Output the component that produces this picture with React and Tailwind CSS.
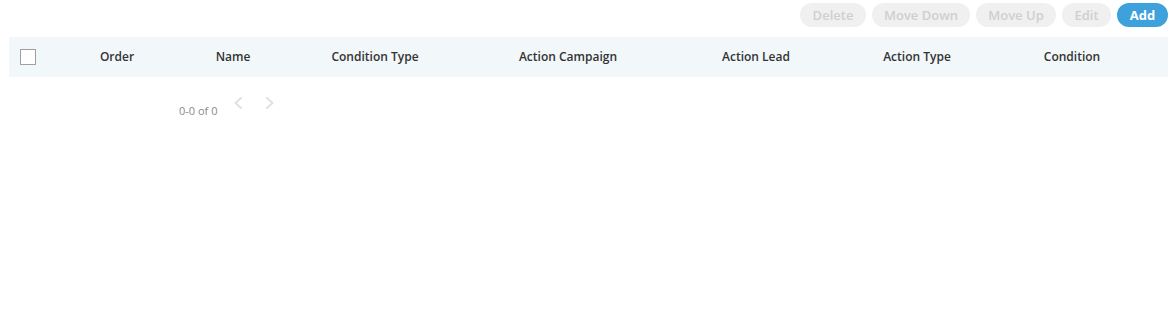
const cols = [
  { label: "Order", w: "w-[116px]" },
  { label: "Name", w: "w-[116px]" },
  { label: "Condition Type", w: "w-[168px]" },
  { label: "Action Campaign", w: "w-[218px]" },
  { label: "Action Lead", w: "w-[158px]" },
  { label: "Action Type", w: "w-[164px]" },
  { label: "Condition", w: "w-[146px]" },
]

const buttons = [
  { label: "Delete", w: "w-[66px]" },
  { label: "Move Down", w: "w-[98px]" },
  { label: "Move Up", w: "w-[80px]" },
  { label: "Edit", w: "w-[49px]" },
]

function Chevron({ dir }) {
  return (
    <svg width="10" height="12" viewBox="0 0 10 12" className="text-[#e2e2e2]">
      <polyline
        points={dir === "left" ? "8,1 2.5,6 8,11" : "2,1 7.5,6 2,11"}
        fill="none"
        stroke="currentColor"
        strokeWidth="2.2"
        strokeLinecap="round"
        strokeLinejoin="round"
      />
    </svg>
  )
}

export default function App() {
  return (
    <div className="w-[1175px] h-[328px] bg-white font-['Open_Sans',sans-serif]">
      <div className="flex justify-end gap-[6px] pt-[3px] pr-[7px]">
        {buttons.map(b => (
          <button
            key={b.label}
            className={`${b.w} h-6 rounded-full bg-[#f0f0f0] text-[#cfcfcf] text-[13px] font-semibold leading-6 text-center`}
          >
            {b.label}
          </button>
        ))}
        <button className="h-6 w-[51px] rounded-full bg-[#3fa1db] text-white text-[13px] font-bold leading-6">
          Add
        </button>
      </div>

      <div className="mx-[9px] mt-[10px] w-[1159px]">
        <div className="flex items-center h-10 bg-[#f2f7fa]">
          <div className="w-[50px] pl-[11px] flex items-center">
            <span className="block w-4 h-4 border border-[#a0a0a0] bg-white" />
          </div>
          {cols.map(c => (
            <div key={c.label} className={`${c.w} text-center text-[12px] font-semibold text-[#333]`}>
              {c.label}
            </div>
          ))}
        </div>

        <div className="flex items-start pl-[170px] mt-[21px]">
          <span className="text-[11px] text-[#8a8a8a] mt-[5px] leading-[16px]">0-0 of 0</span>
          <span className="ml-[16px] mt-[-1px]"><Chevron dir="left" /></span>
          <span className="ml-[22px] mt-[-1px]"><Chevron dir="right" /></span>
        </div>
      </div>
    </div>
  )
}
